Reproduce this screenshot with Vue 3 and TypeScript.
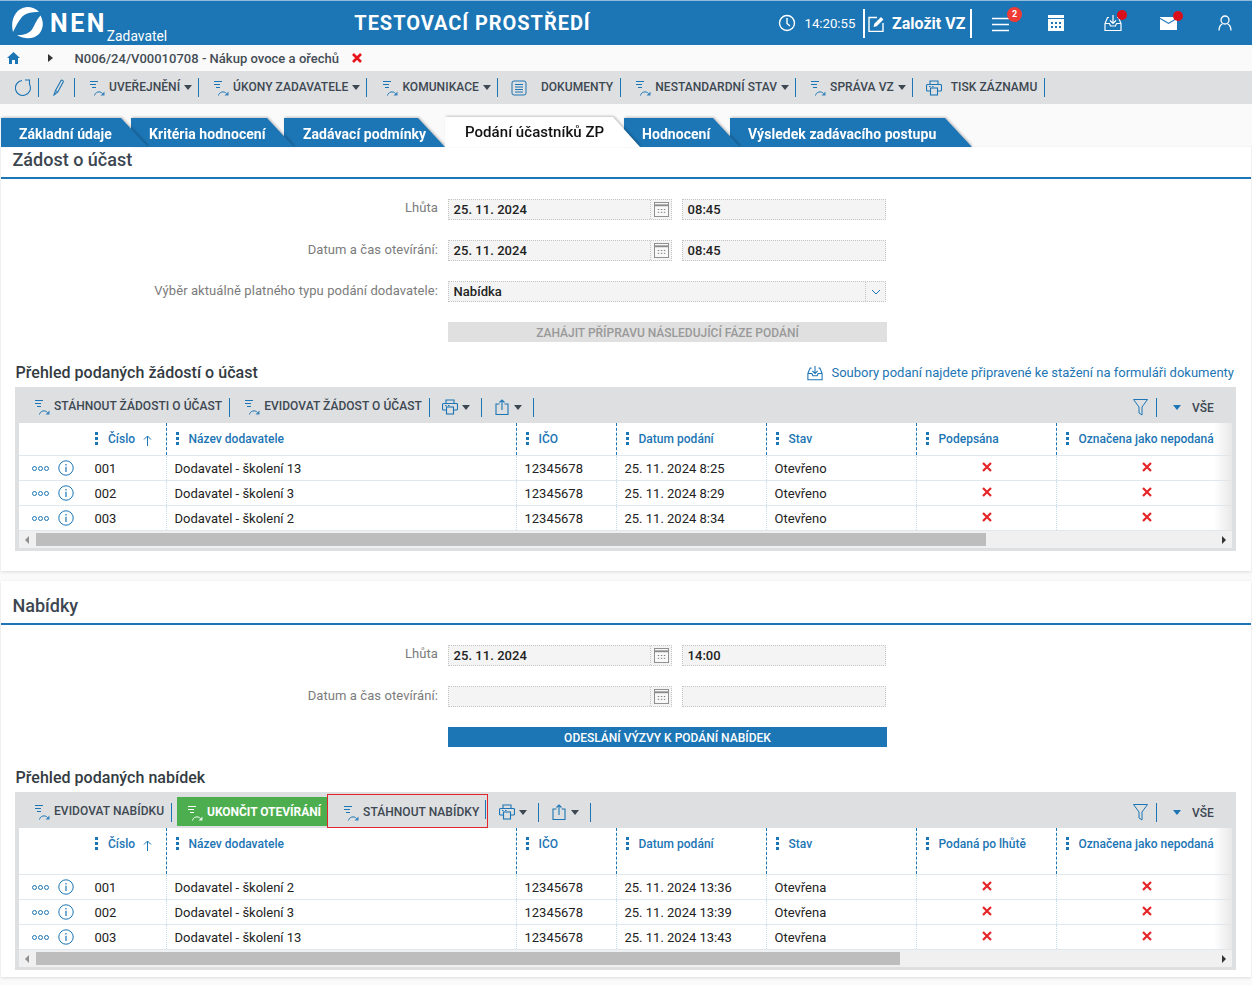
<script setup lang="ts">
interface ToolItem { kind: 'action' | 'sep' | 'icon'; icon?: string; text?: string; caret?: boolean; cls?: string }
interface Field { label: string; date: string; time: string }
interface Row { no: string; name: string; date: string; state: string }
interface Section {
  title: string; heading: string; cls: string; fields: Field[]; select: boolean; button: string; buttonCls: string
  link: boolean; tools: ToolItem[]; cols: string[]; rows: Row[]; thumb: number
}

const a = (text: string, caret = false, icon = 'flow', cls = ''): ToolItem => ({ kind: 'action', text, caret, icon, cls })

const mainTools: ToolItem[] = [
  a('UVEŘEJNĚNÍ', true), a('ÚKONY ZADAVATELE', true), a('KOMUNIKACE', true, 'flow', 'kom'),
  a('DOKUMENTY', false, 'doc', 'wide'), a('NESTANDARDNÍ STAV', true), a('SPRÁVA VZ', true), a('TISK ZÁZNAMU', false, 'print', 'tisk')
]
const tabs = [
  { text: 'Základní údaje', cls: 't1' }, { text: 'Kritéria hodnocení', cls: 't2' }, { text: 'Zadávací podmínky', cls: 't3' },
  { text: 'Podání účastníků ZP', cls: 't4 active' }, { text: 'Hodnocení', cls: 't5' }, { text: 'Výsledek zadávacího postupu', cls: 't6' }
]
const tail: ToolItem[] = [
  { kind: 'icon', icon: 'print', caret: true }, { kind: 'icon', icon: 'share', caret: true }
]
const sections: Section[] = [
  {
    title: 'Zádost o účast', heading: 'Přehled podaných žádostí o účast', cls: 'first', select: true, link: true,
    fields: [
      { label: 'Lhůta', date: '25. 11. 2024', time: '08:45' },
      { label: 'Datum a čas otevírání:', date: '25. 11. 2024', time: '08:45' }
    ],
    button: 'ZAHÁJIT PŘÍPRAVU NÁSLEDUJÍCÍ FÁZE PODÁNÍ', buttonCls: 'off',
    tools: [a('STÁHNOUT ŽÁDOSTI O ÚČAST'), a('EVIDOVAT ŽÁDOST O ÚČAST'), ...tail],
    cols: ['Název dodavatele', 'IČO', 'Datum podání', 'Stav', 'Podepsána', 'Označena jako nepodaná'],
    rows: [
      { no: '001', name: 'Dodavatel - školení 13', date: '25. 11. 2024 8:25', state: 'Otevřeno' },
      { no: '002', name: 'Dodavatel - školení 3', date: '25. 11. 2024 8:29', state: 'Otevřeno' },
      { no: '003', name: 'Dodavatel - školení 2', date: '25. 11. 2024 8:34', state: 'Otevřeno' }
    ],
    thumb: 950
  },
  {
    title: 'Nabídky', heading: 'Přehled podaných nabídek', cls: 'second', select: false, link: false,
    fields: [
      { label: 'Lhůta', date: '25. 11. 2024', time: '14:00' },
      { label: 'Datum a čas otevírání:', date: '', time: '' }
    ],
    button: 'ODESLÁNÍ VÝZVY K PODÁNÍ NABÍDEK', buttonCls: 'on',
    tools: [a('EVIDOVAT NABÍDKU'), a('UKONČIT OTEVÍRÁNÍ', false, 'flow', 'green'), a('STÁHNOUT NABÍDKY', false, 'flow', 'boxed'), ...tail],
    cols: ['Název dodavatele', 'IČO', 'Datum podání', 'Stav', 'Podaná po lhůtě', 'Označena jako nepodaná'],
    rows: [
      { no: '001', name: 'Dodavatel - školení 2', date: '25. 11. 2024 13:36', state: 'Otevřena' },
      { no: '002', name: 'Dodavatel - školení 3', date: '25. 11. 2024 13:39', state: 'Otevřena' },
      { no: '003', name: 'Dodavatel - školení 13', date: '25. 11. 2024 13:43', state: 'Otevřena' }
    ],
    thumb: 864
  }
]
</script>

<template>
  <div class="page">
    <svg class="defs" width="0" height="0" aria-hidden="true">
      <symbol id="flow" viewBox="0 0 16 16">
        <path d="M1 1.500h8M1 4.500h6M3 7.500h4" fill="none" stroke="currentColor" stroke-width="1" />
        <path d="M5.500 15.500C6 12 11 10.500 13.500 13.500" fill="none" stroke="currentColor" stroke-width="1" />
        <path d="M11.500 15.500h4v-4z" fill="currentColor" opacity=".85" />
      </symbol>
      <symbol id="doc" viewBox="0 0 16 16">
        <rect x="1" y="1" width="14" height="14" rx="2" fill="none" stroke="currentColor" />
        <path d="M4 4.500h8M4 7h8M4 9.500h8M4 12h8" stroke="currentColor" stroke-width="1" />
      </symbol>
      <symbol id="print" viewBox="0 0 16 16">
        <path d="M4 4V1h8v3M4 11H1.500a1 1 0 0 1-1-1V5.500a1 1 0 0 1 1-1h13a1 1 0 0 1 1 1V10a1 1 0 0 1-1 1H12" fill="none" stroke="currentColor" stroke-width="1.100" />
        <rect x="4.500" y="8" width="7" height="7" fill="none" stroke="currentColor" stroke-width="1.100" />
        <path d="M3 6.500h1.500M6 6.500h1.500" stroke="currentColor" />
      </symbol>
      <symbol id="share" viewBox="0 0 16 16">
        <path d="M5.500 5H2v10.500h12V5h-3.500" fill="none" stroke="currentColor" stroke-width="1.100" />
        <path d="M8 11V1M5.500 3.500 8 1l2.500 2.500" fill="none" stroke="currentColor" stroke-width="1.100" />
      </symbol>
      <symbol id="cal" viewBox="0 0 16 16">
        <rect x=".5" y=".5" width="15" height="15" fill="#f8f8f8" stroke="#8a8a8a" />
        <path d="M1 3.500h14" stroke="#8a8a8a" stroke-width="2" />
        <path d="M4 8h1.500M7.300 8h1.500M10.500 8h1.500M4 11h1.500M7.300 11h1.500M10.500 11h1.500" stroke="#777" />
      </symbol>
      <symbol id="inbox" viewBox="0 0 18 18">
        <path d="M9 1v8M6 6.500 9 9.500l3-3M5 3.500H3.500L1 9.500v7h16v-7l-2.500-6H13M1 9.500h4.500l1 2.500h5l1-2.500H17" fill="none" stroke="currentColor" stroke-width="1.200" />
      </symbol>
    </svg>

    <header class="top">
      <div class="brand">
        <svg class="logo" viewBox="0 0 32 32">
          <path fill="#fff" d="M2 25C-1 14 4 1 16 0c5 0 9 1.500 12 5C21 5 14 6 10.500 10.500 7.500 14 5 19 2 25z" />
          <path fill="#fff" d="M29.500 8.500C33 15 32.500 22 28 27c-5 5-14 6-22 1 6 .5 12-1.500 15-5.500 2.500-3.500 3.500-8.500 8.500-14z" />
        </svg>
        <b class="nen">NEN</b>
        <span class="role">Zadavatel</span>
      </div>
      <div class="env">TESTOVACÍ PROSTŘEDÍ</div>
      <div class="top-right">
        <svg class="clock" viewBox="0 0 18 18"><circle cx="9" cy="9" r="7.500" fill="none" stroke="#fff" stroke-width="1.400" /><path d="M9 4v5.500l3 2.500" fill="none" stroke="#fff" stroke-width="1.400" /></svg>
        <span class="time">14:20:55</span>
        <span class="create">
          <svg viewBox="0 0 17 17"><path d="M9 2.500H1v14h14V8" fill="none" stroke="#fff" stroke-width="1.400" /><path d="M5.500 12l.8-3.200L13 2l2.400 2.400-6.700 6.800z" fill="#fff" /></svg>
          <b>Založit VZ</b>
        </span>
        <span class="hicon menu">
          <svg viewBox="0 0 17 15"><path d="M0 1.500h17M0 7.500h17M0 13.500h17" stroke="#fff" stroke-width="1.600" /></svg>
          <i class="badge">2</i>
        </span>
        <span class="hicon calendar">
          <svg viewBox="0 0 16 16"><path fill="#fff" d="M0 0h16v3H0zM0 4h16v12H0z" /><path d="M3 7h2v2H3zM7 7h2v2H7zM11 7h2v2h-2zM3 11h2v2H3zM7 11h2v2H7zM11 11h2v2h-2z" fill="#1c75b4" /></svg>
        </span>
        <span class="hicon tray">
          <svg><use href="#inbox" /></svg>
          <i class="dot"></i>
        </span>
        <span class="hicon mail">
          <svg viewBox="0 0 17 13"><path fill="#fff" d="M0 2l8.500 5L17 2v11H0zM0 0h17v.8L8.500 5.800 0 .8z" /></svg>
          <i class="dot"></i>
        </span>
        <span class="hicon user">
          <svg viewBox="0 0 14 16"><circle cx="7" cy="5" r="4" fill="none" stroke="#fff" stroke-width="1.300" /><path d="M1 15.500c0-4 2-6 3.500-6.800M13 15.500c0-4-2-6-3.500-6.800" fill="none" stroke="#fff" stroke-width="1.300" /></svg>
        </span>
      </div>
    </header>

    <nav class="crumbs">
      <svg class="home" viewBox="0 0 13 12"><path fill="#1c75b4" d="M6.500 0 13 6h-2v6H8V8H5v4H2V6H0z" /></svg>
      <i class="tri"></i>
      <span class="path">N006/24/V00010708 - Nákup ovoce a ořechů</span>
      <svg class="cross big" viewBox="0 0 10 10"><path d="M1 1l8 8M9 1 1 9" stroke="#e8141c" stroke-width="2.600" /></svg>
    </nav>

    <div class="mainbar">
      <svg class="refresh" viewBox="0 0 17 17"><path d="M14.800 6A7.500 7.500 0 1 1 7 1.500" fill="none" stroke="#1c75b4" stroke-width="1.100" /><path d="M10 1h4.500v5" fill="none" stroke="#1c75b4" stroke-width="1.100" /></svg>
      <i class="sep"></i>
      <svg class="pen" viewBox="0 0 12 17"><path d="M3.500 11.500 9 1.500c1-.8 2.500 0 2.300 1.300L5.800 13 2 16z" fill="none" stroke="#1c75b4" stroke-width="1.100" /><path d="M3.500 11.500 5.800 13" stroke="#1c75b4" /></svg>
      <i class="sep"></i>
      <template v-for="t in mainTools" :key="t.text">
        <span class="action" :class="t.cls">
          <svg class="ico"><use :href="'#' + t.icon" /></svg>
          <span class="lbl">{{ t.text }}</span>
          <i v-if="t.caret" class="caret"></i>
        </span>
        <i class="sep"></i>
      </template>
    </div>

    <div class="tabs">
      <div v-for="t in tabs" :key="t.text" class="tab" :class="t.cls"><span>{{ t.text }}</span></div>
    </div>

    <section v-for="s in sections" :key="s.title" class="card" :class="s.cls">
      <h2 class="card-title">{{ s.title }}</h2>
      <div class="form">
        <div v-for="f in s.fields" :key="f.label" class="frow">
          <label>{{ f.label }}</label>
          <div class="inp date"><span>{{ f.date }}</span><em><svg><use href="#cal" /></svg></em></div>
          <div class="inp tm"><span>{{ f.time }}</span></div>
        </div>
        <div v-if="s.select" class="frow">
          <label>Výběr aktuálně platného typu podání dodavatele:</label>
          <div class="inp sel">
            <span>Nabídka</span>
            <em><svg viewBox="0 0 10 6"><path d="M1 1l4 4 4-4" fill="none" stroke="#1c75b4" /></svg></em>
          </div>
        </div>
        <div class="frow"><label></label><button class="fbtn" :class="s.buttonCls">{{ s.button }}</button></div>
      </div>

      <div class="subhead">
        <h3>{{ s.heading }}</h3>
        <span v-if="s.link" class="link">
          <svg><use href="#inbox" /></svg>
          Soubory podaní najdete připravené ke stažení na formuláři dokumenty
        </span>
      </div>

      <div class="grid">
        <div class="gridbar">
          <template v-for="t in s.tools" :key="t.text || t.icon">
            <span v-if="t.kind === 'action'" class="action" :class="t.cls">
              <svg class="ico"><use :href="'#' + t.icon" /></svg>
              <span class="lbl">{{ t.text }}</span>
              <i v-if="t.cls === 'boxed'" class="sep innersep"></i>
            </span>
            <span v-else class="iconbtn">
              <svg class="ico"><use :href="'#' + t.icon" /></svg>
              <i class="caret"></i>
            </span>
            <i v-if="t.cls !== 'green' && t.cls !== 'boxed'" class="sep"></i>
          </template>
          <span class="barright">
            <svg class="funnel" viewBox="0 0 15 17"><path d="M.5 .5h14L9 8v8l-3-2V8z" fill="none" stroke="#1c75b4" /></svg>
            <i class="sep"></i>
            <i class="caret blue"></i>
            <span class="lbl">VŠE</span>
          </span>
        </div>
        <div class="tablewrap">
          <div class="tr thead">
            <div class="c first"><i class="kebab"></i><span>Číslo</span>
              <svg class="up" viewBox="0 0 9 11"><path d="M4.500 11V1M1 4.500 4.500 1 8 4.500" fill="none" stroke="#1c75b4" /></svg>
            </div>
            <div v-for="c in s.cols" :key="c" class="c"><i class="kebab"></i><span>{{ c }}</span></div>
          </div>
          <div v-for="r in s.rows" :key="r.no" class="tr tbody">
            <div class="c first">
              <span class="more"><i></i><i></i><i></i></span>
              <svg class="info" viewBox="0 0 16 16"><circle cx="8" cy="8" r="7.200" fill="none" stroke="#1c75b4" /><path d="M8 6.800V12M8 4v1.500" stroke="#1c75b4" stroke-width="1.200" /></svg>
              <span class="no">{{ r.no }}</span>
            </div>
            <div class="c">{{ r.name }}</div>
            <div class="c">12345678</div>
            <div class="c">{{ r.date }}</div>
            <div class="c">{{ r.state }}</div>
            <div class="c mid"><svg class="cross" viewBox="0 0 10 10"><path d="M1 1l8 8M9 1 1 9" stroke="#e42528" stroke-width="2.200" /></svg></div>
            <div class="c mid"><svg class="cross" viewBox="0 0 10 10"><path d="M1 1l8 8M9 1 1 9" stroke="#e42528" stroke-width="2.200" /></svg></div>
          </div>
          <div class="fade"></div>
          <div class="scroll">
            <i class="arrow left"></i>
            <div class="track"><div class="thumb" :style="{ width: s.thumb + 'px' }"></div></div>
            <i class="arrow right"></i>
          </div>
        </div>
      </div>
    </section>
  </div>
</template>

<style>
html, body { margin: 0; background: #fafafa; }
</style>

<style scoped>
.page { width: 1252px; height: 985px; overflow: hidden; background: #fafafa; font-family: Roboto, "Liberation Sans", sans-serif; color: #222; }
.defs { position: absolute; }
i, em { font-style: normal; display: block; }

.top { height: 44px; border-top: 1px solid #8fbcdc; background: #1c75b4; color: #fff; display: flex; align-items: center; position: relative; }
.brand { display: flex; align-items: flex-start; margin-left: 11px; width: 339px; height: 44px; }
.logo { width: 32px; height: 32px; margin-top: 6px; }
.nen { font-size: 25px; font-weight: 700; letter-spacing: 2.500px; margin: 8px 0 0 7px; line-height: 30px; }
.role { font-size: 13.800px; line-height: 16px; margin: 27px 0 0 0; }
.env { width: 247px; text-align: center; font-size: 20px; font-weight: 700; letter-spacing: .95px; margin-left: -1px; }
.top-right { display: flex; align-items: center; margin-left: 182px; height: 44px; }
.clock { width: 18px; height: 18px; }
.time { font-size: 13.200px; margin-left: 8.500px; width: 58.500px; }
.create { display: flex; align-items: center; height: 29px; width: 109px; border-left: 2px solid #fff; border-right: 2px solid #fff; box-sizing: border-box; }
.create svg { width: 17px; height: 17px; margin-left: 3px; }
.create b { font-size: 16px; margin-left: 7px; white-space: nowrap; }
.hicon { position: relative; display: block; }
.hicon svg { display: block; width: 100%; height: 100%; }
.menu { width: 17px; height: 15px; margin-left: 20px; margin-top: 2px; }
.calendar { width: 16px; height: 16px; margin-left: 39px; }
.tray { width: 18px; height: 18px; margin-left: 40px; }
.mail { width: 17px; height: 13px; margin-left: 38px; }
.user { width: 14px; height: 16px; margin-left: 41px; }
.badge { position: absolute; left: 15px; top: -10px; width: 15px; height: 15px; border-radius: 50%; background: #ee3b36; color: #fff; font-size: 9px; font-weight: 700; line-height: 15px; text-align: center; }
.dot { position: absolute; width: 10px; height: 10px; border-radius: 50%; background: #d9101c; }
.tray .dot { left: 13px; top: -4px; }
.mail .dot { left: 13px; top: -6px; }

.crumbs { height: 26px; display: flex; align-items: center; }
.home { width: 13px; height: 12px; margin-left: 7px; }
.tri { width: 0; height: 0; border-left: 5px solid #333; border-top: 4px solid transparent; border-bottom: 4px solid transparent; margin-left: 28px; }
.path { font-size: 13px; font-weight: 500; color: #444d55; margin-left: 21.500px; white-space: nowrap; letter-spacing: .02px; }
.cross { width: 10px; height: 10px; display: block; }
.cross.big { margin-left: 13px; }

.mainbar { height: 33px; background: #dddfe1; display: flex; align-items: center; }
.sep { width: 1px; height: 19px; background: #1c75b4; flex: none; }
.refresh { width: 17px; height: 17px; margin: 0 6px 0 15px; }
.pen { width: 12px; height: 17px; margin: 0 10px 0 13px; }
.action { display: flex; align-items: center; height: 33px; padding: 0 7px 0 14px; white-space: nowrap; color: #3e4852; }
.ico { width: 16px; height: 16px; color: #1c75b4; flex: none; }
.lbl { font-size: 12px; font-weight: 500; color: #3e4852; margin-left: 4px; letter-spacing: .05px; }
.mainbar .lbl { margin-top: -2px; }
.caret { width: 0; height: 0; border-top: 5px solid #3e4852; border-left: 4px solid transparent; border-right: 4px solid transparent; margin-left: 4px; }
.action .caret { margin-right: -1px; }
.action.kom { padding-left: 15px; }
.action.wide { padding-left: 13px; }
.action.wide .lbl { margin-left: 14px; }
.action.tisk { padding-left: 13px; }
.action.tisk .lbl { margin-left: 9px; }

.tabs { display: flex; height: 29px; margin-top: 14px; position: relative; }
.tab { position: relative; height: 29px; filter: drop-shadow(1px -1px 1px rgba(0, 0, 0, .22)); font-size: 14px; font-weight: 700; color: #fff; letter-spacing: .05px; }
.tab::before { content: ""; position: absolute; inset: 0; background: #1c75b4; clip-path: polygon(0 0, calc(100% - 27px) 0, 100% 100%, 0 100%); }
.tab span { position: absolute; top: 8px; left: 18px; line-height: 17px; white-space: nowrap; }
.t1 { width: 147px; margin-left: 1px; z-index: 6; }
.t2 { width: 163px; margin-left: -17px; z-index: 5; }
.t3 { width: 161px; margin-left: -10px; z-index: 4; }
.t3 span { left: 19px; }
.t4 { width: 195px; z-index: 7; color: #111; font-weight: 500; font-size: 15px; }
.t4::before { background: #fff; top: -1px; }
.t4 span { left: 20px; top: 6px; }
.t5 { width: 116px; margin-left: -16px; z-index: 3; }
.t6 { width: 242px; margin-left: -10px; z-index: 2; }

.card { background: #fff; margin: 0 1px; box-shadow: 0 1px 3px rgba(0, 0, 0, .12); position: relative; }
.card.first { height: 424px; }
.card.second { height: 396px; margin-top: 10px; }
.card-title { margin: 0; font-size: 18px; font-weight: 500; color: #3c4650; border-bottom: 2px solid #1c75b4; padding-left: 11.500px; box-sizing: border-box; }
.first .card-title { height: 32px; line-height: 25px; }
.second .card-title { height: 44px; line-height: 50px; }

.form { padding-top: 20px; }
.frow { display: flex; margin-bottom: 20px; height: 21px; }
.frow:last-child { height: 20px; margin-bottom: 0; }
.frow label { width: 437px; margin-right: 10px; text-align: right; font-size: 13px; color: #7b7b7b; line-height: 20px; flex: none; white-space: nowrap; letter-spacing: .08px; }
.frow:first-child label { line-height: 18px; }
.inp { box-sizing: border-box; height: 21px; background: #f4f4f4; border: 1px dotted #c4c4c4; display: flex; align-items: center; font-size: 13px; font-weight: 500; color: #222; letter-spacing: .05px; }
.inp span { padding-left: 4.500px; flex: 1; }
.inp em { width: 20px; height: 19px; border-left: 1px dotted #c4c4c4; display: flex; align-items: center; justify-content: center; }
.date { width: 224px; margin-right: 10px; }
.date em svg { width: 15px; height: 15px; }
.tm { width: 204px; }
.sel { width: 438px; }
.sel em { width: 19px; }
.sel em svg { width: 10px; height: 6px; }
.fbtn { width: 439px; height: 20px; border: 0; padding: 1px 0 0; font: 500 12px Roboto, sans-serif; }
.fbtn.off { background: #e0e0e0; color: #999; }
.fbtn.on { background: #1c75b4; color: #fff; }

.subhead { display: flex; justify-content: space-between; align-items: center; height: 21px; padding-bottom: 4px; margin: 20px 17px 0 14.500px; }
.subhead h3 { margin: 0; font-size: 16px; font-weight: 500; color: #333b42; letter-spacing: .03px; }
.link { display: flex; align-items: center; font-size: 13px; color: #1c75b4; }
.link svg { width: 16px; height: 16px; margin-right: 8px; }

.grid { margin: 0 15px 0 14px; background: #dddfe1; padding: 0 4px 3px; }
.gridbar { height: 36px; display: flex; align-items: center; margin: 0 -4px; padding-left: 5px; position: relative; }
.gridbar .action { height: 36px; }
.gridbar .sep, .gridbar .ico, .gridbar .caret, .funnel { margin-top: 4px; }
.gridbar .lbl { margin-top: 2px; }
.gridbar .action.green { background: #4cae4f; height: 29px; padding: 0 7px 0 10px; margin: 2px 0 0 5px; }
.green .lbl { color: #fff; font-weight: 700; letter-spacing: -.03px; }
.green .ico { color: #fff; }
.gridbar .action.boxed { height: 34px; box-sizing: border-box; border: 1px solid #e3242b; padding: 0 0 0 15px; margin: 2px -1px 0 -1px; width: 161px; position: relative; }
.gridbar .innersep { position: absolute; right: 1px; top: 5px; margin: 0; }
.iconbtn { display: flex; align-items: center; padding: 0 11px 0 12px; height: 36px; }
.barright { position: absolute; left: 1118px; top: 0; height: 36px; display: flex; align-items: center; }
.funnel { width: 15px; height: 17px; margin-right: 8px; }
.caret.blue { border-top-color: #1c75b4; margin-left: 16px; margin-right: 6px; }
.gridbar .barright .lbl { margin-left: 5px; margin-top: 6px; }

.tablewrap { background: #fff; position: relative; overflow: hidden; }
.tr { display: grid; grid-template-columns: 147px 350px 100px 150px 150px 140px 180px; border-bottom: 1px solid #dfe8ef; box-sizing: border-box; }
.thead { height: 33px; }
.second .thead { height: 47px; }
.tbody { height: 25px; }
.c { display: flex; align-items: center; padding-left: 7.500px; font-size: 13px; border-left: 1px dotted #c5dceb; white-space: nowrap; min-width: 0; color: #222; }
.c.first { padding-left: 0; border-left: 0; }
.c.mid { justify-content: center; padding-left: 0; padding-bottom: 3px; }
.thead .c { border-left: 1px dashed #1c75b4; color: #1c75b4; font-size: 12px; font-weight: 500; letter-spacing: .02px; align-items: flex-start; padding-top: 9px; line-height: 15px; padding-left: 9px; }
.thead .c.first { border-left: 0; padding-left: 75px; }
.thead .c.first .kebab { margin-left: .5px; margin-right: 10.500px; }
.kebab { width: 3px; height: 13px; margin-right: 9.500px; flex: none; background: radial-gradient(circle at 1.500px 1.500px, #1c75b4 1.500px, transparent 1.600px) 0 0 / 3px 5px repeat-y; }
.up { width: 9px; height: 11px; margin-left: 7.500px; margin-top: 3px; }
.more { display: flex; gap: 1px; margin-left: 13px; }
.more i { width: 5px; height: 5px; box-sizing: border-box; border: 1px solid #1c75b4; border-radius: 50%; }
.info { width: 16px; height: 16px; margin-left: 9px; }
.no { margin-left: 20.500px; }
.fade { position: absolute; right: 0; top: 0; bottom: 17px; width: 18px; background: linear-gradient(to right, rgba(235, 235, 235, 0), rgba(228, 228, 228, .85)); pointer-events: none; }
.scroll { height: 17px; background: #f0f0f0; display: flex; align-items: center; }
.arrow { width: 0; height: 0; border-top: 4px solid transparent; border-bottom: 4px solid transparent; flex: none; }
.arrow.left { border-right: 4px solid #666; margin: 0 7px 0 6px; opacity: .7; }
.arrow.right { border-left: 4px solid #333; margin: 0 6px 0 7px; }
.track { flex: 1; height: 13px; }
.thumb { height: 13px; background: #bdbdbd; }
</style>
